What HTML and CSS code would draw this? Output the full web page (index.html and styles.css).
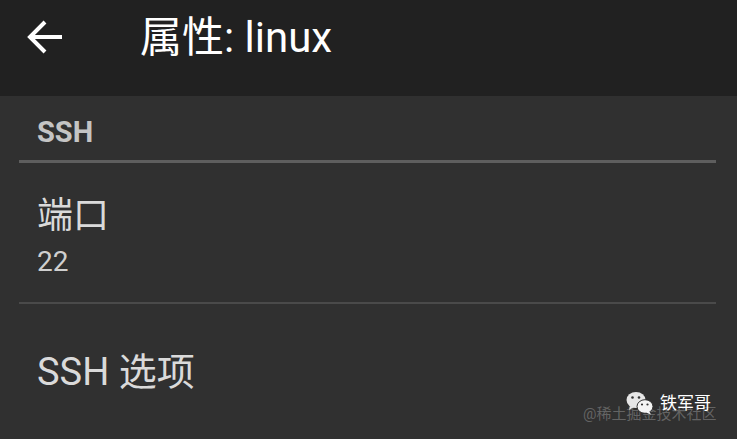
FILE: index.html
```html
<!DOCTYPE html>
<html lang="zh-CN">
<head>
    <meta charset="UTF-8">
    <meta name="viewport" content="width=device-width, initial-scale=1.0">
    <title>属性: linux</title>
    <link rel="stylesheet" href="styles.css">
</head>
<body>
    <div class="topbar">
        <svg class="back" width="36" height="36" viewBox="0 0 36 36">
            <path d="M18 3 L3 18 L18 33 M3 18 H35" fill="none" stroke="#fff" stroke-width="4"/>
        </svg>
        <h1 class="title">属性: linux</h1>
    </div>

    <div class="content">
        <div class="section-head">SSH</div>
        <div class="item">
            <div class="item-title">端口</div>
            <div class="item-value">22</div>
        </div>
        <div class="item last">
            <div class="item-title big">SSH 选项</div>
        </div>
    </div>

    <div class="watermark">
        <span class="site">@稀土掘金技术社区</span>
        <span class="author">
            <svg class="wechat" width="28" height="24" viewBox="0 0 28 24">
                <ellipse cx="10" cy="9" rx="9.5" ry="8" fill="#e6e6e6"/>
                <path d="M4 15 L3 19 L8 16 Z" fill="#e6e6e6"/>
                <circle cx="6.5" cy="6.5" r="1.3" fill="#333"/>
                <circle cx="13" cy="6.5" r="1.3" fill="#333"/>
                <ellipse cx="19" cy="15.5" rx="8" ry="6.8" fill="#f4f4f4" stroke="#333" stroke-width="1"/>
                <path d="M23 20 L25 23.5 L20 21.5 Z" fill="#f4f4f4"/>
                <circle cx="16" cy="13.5" r="1.1" fill="#333"/>
                <circle cx="21.5" cy="13.5" r="1.1" fill="#333"/>
            </svg>
            铁军哥
        </span>
    </div>
</body>
</html>
```

FILE: styles.css
```css
html, body {
    margin: 0;
    padding: 0;
}
body {
    width: 737px;
    height: 439px;
    overflow: hidden;
    background: #303030;
    font-family: "Roboto", "Noto Sans CJK SC", sans-serif;
    color: #d8d8d8;
    position: relative;
}
.topbar {
    height: 76px;
    padding-bottom: 20px;
    background: #212121;
    display: flex;
    align-items: center;
}
.back {
    margin-left: 27px;
    margin-top: -3px;
}
.title {
    margin: 0 0 0 77px;
    font-size: 42px;
    line-height: 42px;
    font-weight: 400;
    color: #fff;
}
.content {
    padding: 0 21px 0 19px;
}
.section-head {
    padding: 22px 18px 14px;
    font-size: 29px;
    line-height: 28px;
    font-weight: 700;
    color: #c4c4c4;
    border-bottom: 3px solid #5e5e5e;
}
.item {
    padding: 33px 18px 24px;
    border-bottom: 2px solid #4a4a4a;
}
.item.last {
    border-bottom: none;
    padding-top: 46px;
}
.item-title {
    font-size: 36px;
    line-height: 40px;
    color: #dadada;
}
.item-title.big {
    font-size: 38px;
    line-height: 44px;
}
.item-value {
    margin-top: 10px;
    font-size: 28px;
    line-height: 32px;
    color: #cfcfcf;
}
.watermark {
    position: absolute;
    right: 20px;
    bottom: 14px;
    width: 134px;
    height: 34px;
}
.site {
    position: absolute;
    left: 0;
    top: 14px;
    font-size: 15px;
    line-height: 18px;
    color: rgba(200, 200, 200, 0.35);
    white-space: nowrap;
}
.author {
    position: absolute;
    left: 43px;
    top: 0;
    display: flex;
    align-items: center;
    gap: 6px;
    font-size: 17px;
    line-height: 24px;
    color: #fff;
    white-space: nowrap;
}
```
